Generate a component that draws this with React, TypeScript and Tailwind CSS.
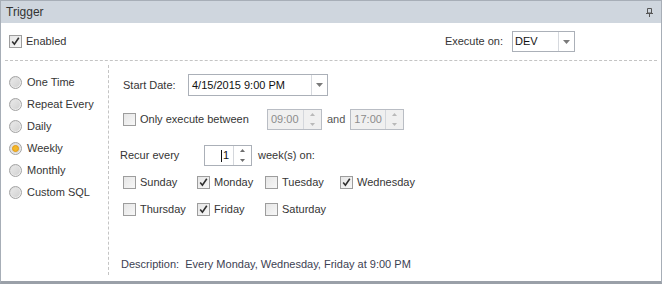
import React from "react";

function Check({ checked = false }: { checked?: boolean }) {
  return (
    <span className="relative inline-block w-[13px] h-[13px] border border-[#9d9d9d] bg-gradient-to-br from-[#e6e6e6] to-[#f7f7f7] shrink-0">
      {checked && (
        <svg viewBox="0 0 11 11" className="absolute left-0 top-0 w-[11px] h-[11px]">
          <path d="M2.2 5.6 L4.4 8.2 L8.8 1.8" fill="none" stroke="#2f2f2f" strokeWidth="1.6" />
        </svg>
      )}
    </span>
  );
}

function Radio({ checked = false }: { checked?: boolean }) {
  return (
    <span className="relative inline-flex items-center justify-center w-[13px] h-[13px] rounded-full border border-[#a3a3a3] bg-gradient-to-br from-[#d8d8d8] to-[#f4f4f4] shrink-0">
      <span className="w-[9px] h-[9px] rounded-full bg-gradient-to-br from-[#e9e9e9] to-[#d2d2d2]" />
      {checked && (
        <span className="absolute w-[7px] h-[7px] rounded-full bg-[#f3b82a] border border-[#e59a13]" />
      )}
    </span>
  );
}

function ArrowDown() {
  return (
    <svg width="7" height="4" viewBox="0 0 7 4">
      <path d="M0 0 H7 L3.5 4 Z" fill="#7a7a7a" />
    </svg>
  );
}

function SpinButtons({ disabled = false }: { disabled?: boolean }) {
  const c = disabled ? "#b9b9b9" : "#6d6d6d";
  return (
    <div className="flex flex-col w-[18px] h-full border-l border-[#d4d7dc]">
      <div className="flex-1 flex items-center justify-center">
        <svg width="5" height="3" viewBox="0 0 5 3">
          <path d="M0 3 L2.5 0 L5 3 Z" fill={c} />
        </svg>
      </div>
      <div className="flex-1 flex items-center justify-center">
        <svg width="5" height="3" viewBox="0 0 5 3">
          <path d="M0 0 L5 0 L2.5 3 Z" fill={c} />
        </svg>
      </div>
    </div>
  );
}

const days: [string, boolean][][] = [
  [
    ["Sunday", false],
    ["Monday", true],
    ["Tuesday", false],
    ["Wednesday", true],
  ],
  [
    ["Thursday", false],
    ["Friday", true],
    ["Saturday", false],
  ],
];
const colW = ["w-[74px]", "w-[68px]", "w-[75px]", "w-[90px]"];

export default function App() {
  return (
    <div
      className="w-[662px] h-[284px] bg-white border border-[#a7aeb7] border-b-[3px] border-b-[#9aa0a8] flex flex-col text-[11px] text-[#353535] leading-none"
      style={{ fontFamily: '"Liberation Sans", Arial, sans-serif' }}
    >
      <div className="h-[22px] bg-[#cfd6de] flex items-center justify-between pl-[5px] pr-[8px] shrink-0">
        <span className="text-[12px] text-[#333]">Trigger</span>
        <svg width="7" height="9" viewBox="0 0 7 9">
          <path d="M1.5 0.5 H5.5 V5 H1.5 Z" fill="none" stroke="#555" />
          <path d="M0 5.5 H7" stroke="#555" />
          <path d="M3.5 5.5 V9" stroke="#555" />
        </svg>
      </div>

      <div className="h-[37px] flex items-center justify-between pl-[8px] pr-[86px] shrink-0">
        <label className="flex items-center gap-[4px]">
          <Check checked />
          <span>Enabled</span>
        </label>
        <div className="flex items-center gap-[9px]">
          <span>Execute on:</span>
          <div className="flex w-[63px] h-[21px] border border-[#abb0b8] bg-white">
            <span className="flex-1 flex items-center pl-[2px] text-[#111]">DEV</span>
            <span className="w-[16px] flex items-center justify-center border-l border-[#d6d9de]">
              <ArrowDown />
            </span>
          </div>
        </div>
      </div>

      <div className="mx-[4px] border-t border-dashed border-[#c4c4c4] shrink-0" />

      <div className="flex flex-1">
        <div className="w-[107px] pl-[8px] pt-[10px] flex flex-col shrink-0">
          {[
            ["One Time", false],
            ["Repeat Every", false],
            ["Daily", false],
            ["Weekly", true],
            ["Monthly", false],
            ["Custom SQL", false],
          ].map(([label, c]) => (
            <label key={label as string} className="h-[22px] flex items-center gap-[5px]">
              <Radio checked={c as boolean} />
              <span>{label as string}</span>
            </label>
          ))}
        </div>
        <div className="mt-[4px] mb-[6px] border-l border-dashed border-[#c4c4c4]" />
        <div className="flex-1 pl-[14px] pt-[13px] flex flex-col">
          <div className="flex items-center h-[22px]">
            <span className="w-[65px]">Start Date:</span>
            <div className="flex w-[140px] h-[22px] border border-[#abb0b8] bg-white">
              <span className="flex-1 flex items-center pl-[3px] text-[#111]">4/15/2015 9:00 PM</span>
              <span className="w-[16px] flex items-center justify-center border-l border-[#d6d9de]">
                <ArrowDown />
              </span>
            </div>
          </div>

          <div className="flex items-center h-[21px] mt-[13px]">
            <label className="flex items-center gap-[4px] w-[144px]">
              <Check />
              <span>Only execute between</span>
            </label>
            <div className="flex w-[55px] h-[21px] border border-[#b9bdc4] bg-[#f0f0f0]">
              <span className="flex-1 flex items-center pl-[3px] text-[#8c8c8c]">09:00</span>
              <SpinButtons disabled />
            </div>
            <span className="mx-[5px] text-[#555]">and</span>
            <div className="flex w-[54px] h-[21px] border border-[#b9bdc4] bg-[#f0f0f0]">
              <span className="flex-1 flex items-center pl-[3px] text-[#8c8c8c]">17:00</span>
              <SpinButtons disabled />
            </div>
          </div>

          <div className="flex items-center h-[21px] mt-[15px] -ml-[3px]">
            <span className="w-[84px]">Recur every</span>
            <div className="flex w-[48px] h-[21px] border border-[#abb0b8] bg-white">
              <span className="flex-1 flex items-center justify-end pr-[4px] text-[#111]">
                <span className="w-px h-[12px] bg-[#111] mr-[1px]" />1
              </span>
              <SpinButtons />
            </div>
            <span className="ml-[6px]">week(s) on:</span>
          </div>

          <div className="flex flex-col mt-[5px] gap-[5px]">
            {days.map((row, ri) => (
              <div key={ri} className="flex items-center h-[22px]">
                {row.map(([d, c], ci) => (
                  <label key={d} className={`flex items-center gap-[4px] ${colW[ci]}`}>
                    <Check checked={c} />
                    <span>{d}</span>
                  </label>
                ))}
              </div>
            ))}
          </div>

          <div className="mt-[39px] -ml-[2px] text-[#3c4152]">
            Description:&nbsp;&nbsp;Every Monday, Wednesday, Friday at 9:00 PM
          </div>
        </div>
      </div>
    </div>
  );
}
